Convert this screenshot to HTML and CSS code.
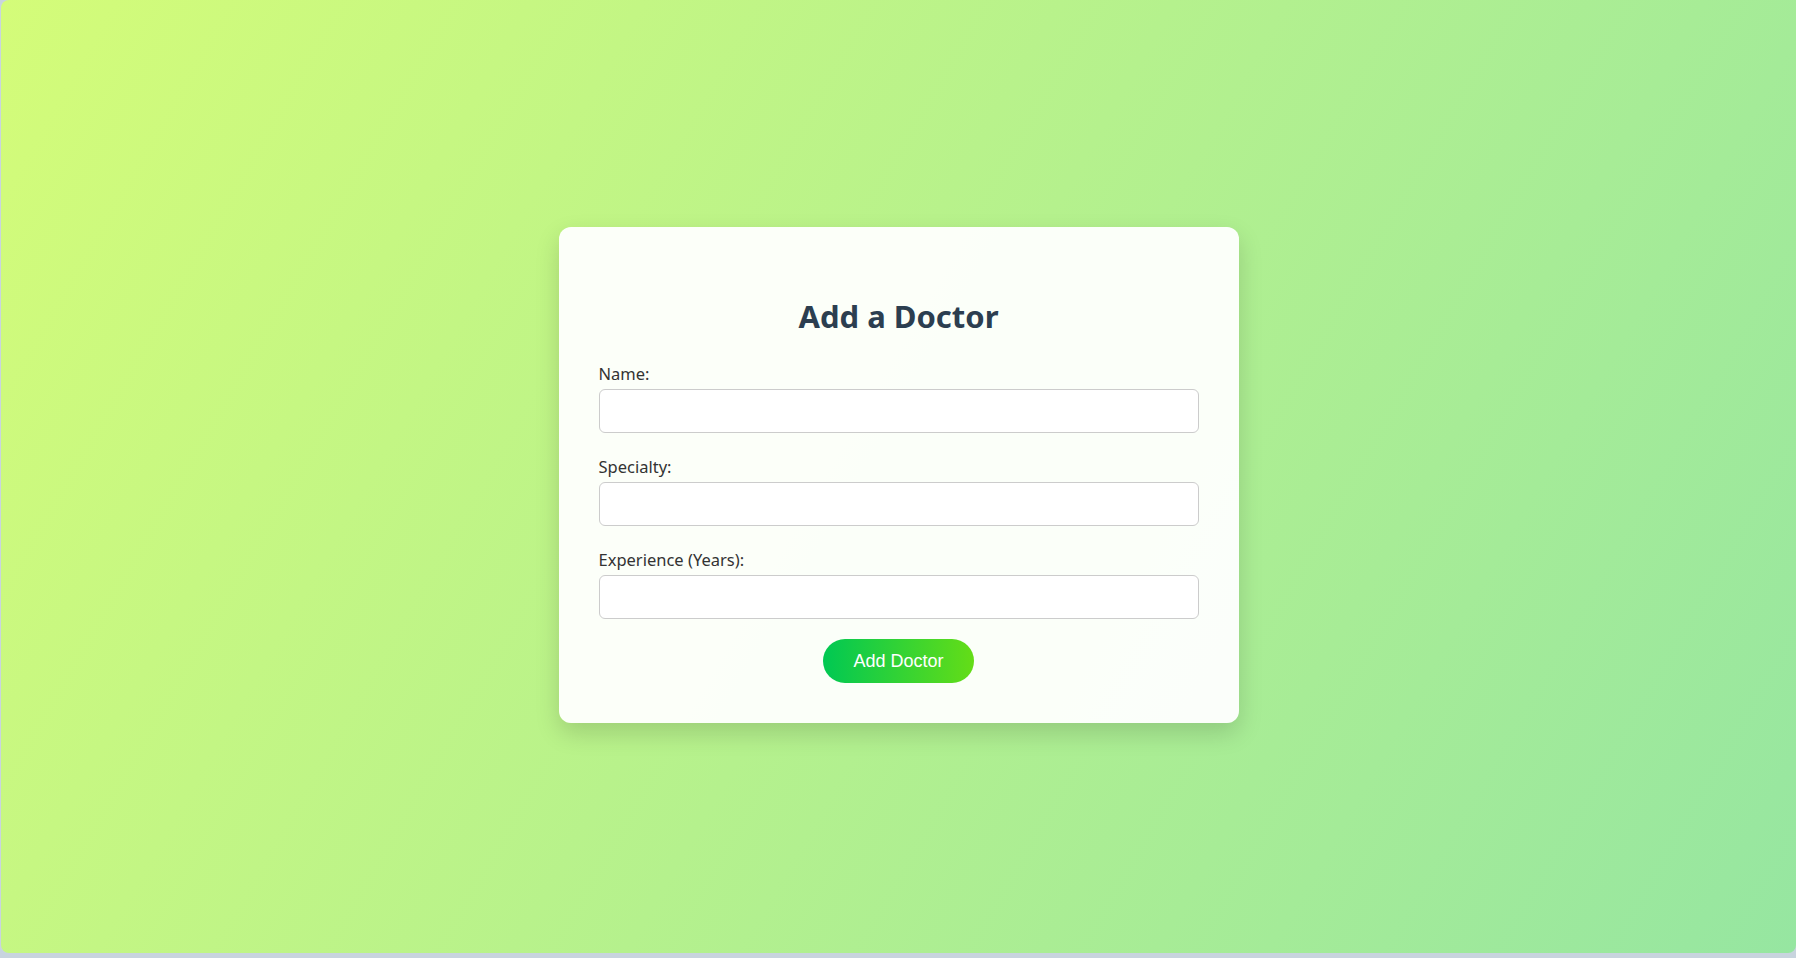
FILE: index.html
```html
<!DOCTYPE html>
<html lang="en">
<head>
<meta charset="UTF-8">
<title>Add a Doctor</title>
<link rel="stylesheet" href="styles.css">
</head>
<body>
<div class="page">
  <div class="card">
    <h2 class="title">Add a Doctor</h2>
    <form class="form">
      <div class="group">
        <label class="label" for="name">Name:</label>
        <input class="input" id="name" type="text">
      </div>
      <div class="group">
        <label class="label" for="specialty">Specialty:</label>
        <input class="input" id="specialty" type="text">
      </div>
      <div class="group last">
        <label class="label" for="experience">Experience (Years):</label>
        <input class="input" id="experience" type="number">
      </div>
      <button class="btn" type="button">Add Doctor</button>
    </form>
  </div>
</div>
</body>
</html>
```
FILE: styles.css
```css
html, body {
  margin: 0;
  padding: 0;
  height: 100%;
  background: #c8d4de;
}
body {
  font-family: "Noto Sans", "Open Sans", sans-serif;
}
.page {
  box-sizing: border-box;
  margin-left: 1px;
  height: 953px;
  padding-bottom: 3px;
  border-radius: 8px 0 8px 8px;
  background: linear-gradient(120deg, #d4fc79 0%, #96e6a1 100%);
  display: flex;
  align-items: center;
  justify-content: center;
}
.card {
  box-sizing: border-box;
  width: 680px;
  padding: 40px;
  background: rgba(255, 255, 255, 0.95);
  border-radius: 12px;
  box-shadow: 0 10px 25px rgba(0, 0, 0, 0.15);
}
.title {
  margin: 29px 0 25px;
  text-align: center;
  font-size: 31px;
  font-weight: 700;
  color: #2c3e50;
  line-height: 41px;
}
.form {
  display: flex;
  flex-direction: column;
}
.group {
  display: flex;
  flex-direction: column;
  margin-bottom: 22px;
}
.group.last {
  margin-bottom: 20px;
}
.label {
  font-size: 16.5px;
  line-height: 23px;
  color: #333;
  margin-bottom: 4px;
}
.input {
  box-sizing: border-box;
  height: 44px;
  width: 100%;
  border: 1px solid #ccc;
  border-radius: 6px;
  background: #fff;
  padding: 10px;
  font-size: 16px;
}
.btn {
  align-self: center;
  height: 44px;
  padding: 0 30px;
  border: none;
  border-radius: 22px;
  background: linear-gradient(90deg, #00c853 0%, #64dd17 100%);
  color: #fff;
  font-family: "Liberation Sans", Arial, sans-serif;
  font-size: 18px;
  cursor: pointer;
}
```
